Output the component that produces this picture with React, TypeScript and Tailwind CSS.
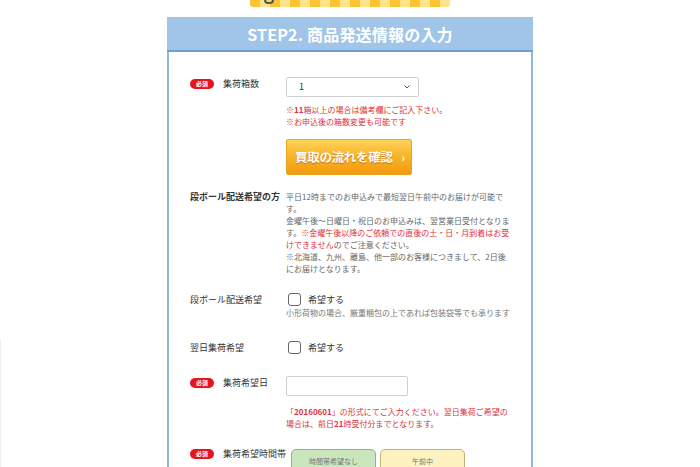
import React from 'react';

const jp = { fontFamily: '"Noto Sans CJK JP", "Noto Sans", sans-serif' };

function Badge() {
  return (
    <span className="inline-flex h-[10px] w-[24px] items-center justify-center rounded-full bg-[#e8141c] text-[6px] font-bold leading-none text-white">
      必須
    </span>
  );
}

function Label({ required, bold, children }: { required?: boolean; bold?: boolean; children: React.ReactNode }) {
  return (
    <div className="flex w-[96px] shrink-0 items-center">
      {required ? <Badge /> : null}
      <span className={`${required ? 'ml-[9px]' : ''} text-[9px] leading-[12px] text-[#333] ${bold ? 'font-bold' : ''}`}>
        {children}
      </span>
    </div>
  );
}

function Check({ text }: { text: string }) {
  return (
    <div className="flex items-center">
      <span className="ml-[2px] inline-block h-[13px] w-[13px] rounded-[3px] border border-[#666] bg-white" />
      <span className="ml-[7px] text-[9px] leading-[12px] text-[#333]">{text}</span>
    </div>
  );
}

export default function App() {
  return (
    <div className="relative h-[467px] w-full overflow-hidden bg-white" style={jp}>
      <div className="absolute left-0 top-[340px] h-[127px] w-px bg-[#eeeeee]" />
      <div className="mx-auto w-[366px]">
        {/* banner bottom edge */}
        <div className="relative mx-auto h-[7px] w-[200px] rounded-b-[3px] bg-[repeating-linear-gradient(90deg,#fbc531_0px,#fbc531_10px,#fde38a_10px,#fde38a_20px)]">
          <span className="absolute left-[14px] top-[-4px] h-[8px] w-[10px] rounded-full border-2 border-[#555] bg-[#f5d36a]" />
        </div>

        <div className="mt-[10px] flex h-[35px] items-center justify-center border-b-2 border-[#6e9fd0] bg-[#a0c5e8]">
          <h2 className="text-[16px] font-bold tracking-[0.2px] text-white">STEP2. 商品発送情報の入力</h2>
        </div>

        <div className="h-[420px] border-x-2 border-[#8cb6da] pl-[21px] pt-[25px]">
          {/* 集荷箱数 */}
          <div className="flex items-start">
            <div className="mt-[1px]">
              <Label required>集荷箱数</Label>
            </div>
            <div>
              <div className="flex h-[20px] w-[133px] items-center justify-between rounded-[2px] border border-[#cfcfcf] bg-white pl-[12px] pr-[8px]">
                <span className="text-[9px] text-[#333]">1</span>
                <svg width="6" height="4" viewBox="0 0 6 4">
                  <path d="M0.5 0.5 L3 3 L5.5 0.5" fill="none" stroke="#555" strokeWidth="1" />
                </svg>
              </div>
              <div className="mt-[7px] text-[8px] leading-[12px] text-[#e0303a]">
                <p>
                  ※<span className="font-bold">11</span>箱以上の場合は備考欄にご記入下さい。
                </p>
                <p>※お申込後の箱数変更も可能です</p>
              </div>
              <div className="mt-[11px] flex h-[36px] w-[126px] items-center rounded-[2px] border border-[#eaa524] bg-[linear-gradient(180deg,#fdd35a_0%,#f9b52b_45%,#f39a0e_100%)] pl-[8px]">
                <span className="text-[12.5px] font-bold tracking-[-0.3px] text-white [text-shadow:0_1px_1px_#c0700a]">
                  買取の流れを確認
                </span>
                <span className="ml-[9px] text-[11px] font-bold text-white">›</span>
              </div>
            </div>
          </div>

          {/* 段ボール配送希望の方 */}
          <div className="mt-[16px] flex items-start">
            <Label bold>段ボール配送希望の方</Label>
            <div className="w-[226px] whitespace-nowrap text-[8px] leading-[12px] text-[#666]">
              <p>平日12時までのお申込みで最短翌日午前中のお届けが可能で</p>
              <p>す。</p>
              <p>金曜午後～日曜日・祝日のお申込みは、翌営業日受付となりま</p>
              <p>
                す。<span className="text-[#e0303a]">※金曜午後以降のご依頼での直後の土・日・月到着はお受</span>
              </p>
              <p>
                <span className="text-[#e0303a]">けできません</span>のでご注意ください。
              </p>
              <p>※北海道、九州、離島、他一部のお客様につきまして、2日後</p>
              <p>にお届けとなります。</p>
            </div>
          </div>

          {/* 段ボール配送希望 */}
          <div className="mt-[18px] flex items-start">
            <div className="mt-[1px]">
              <Label>段ボール配送希望</Label>
            </div>
            <div>
              <Check text="希望する" />
              <p className="mt-[1px] text-[8px] leading-[12px] text-[#777]">
                小形荷物の場合、厳重梱包の上であれば包装袋等でも承ります
              </p>
            </div>
          </div>

          {/* 翌日集荷希望 */}
          <div className="mt-[22px] flex items-start">
            <div className="mt-[1px]">
              <Label>翌日集荷希望</Label>
            </div>
            <Check text="希望する" />
          </div>

          {/* 集荷希望日 */}
          <div className="mt-[22px] flex items-start">
            <div className="mt-[1px]">
              <Label required>集荷希望日</Label>
            </div>
            <div>
              <div className="h-[20px] w-[122px] rounded-[2px] border border-[#cfcfcf] bg-white" />
              <div className="mt-[10px] w-[226px] text-[8px] leading-[12px] text-[#e0303a]">
                <p>
                  「<span className="font-bold">20160601</span>」の形式にてご入力ください。翌日集荷ご希望の
                </p>
                <p>
                  場合は、前日<span className="font-bold">21</span>時受付分までとなります。
                </p>
              </div>
            </div>
          </div>

          {/* 集荷希望時間帯 */}
          <div className="mt-[19px] flex items-start">
            <div className="mt-[-1px]">
              <Label required>集荷希望時間帯</Label>
            </div>
            <div className="ml-[5px] flex gap-[4px]">
              <div className="flex h-[24px] w-[85px] items-center justify-center rounded-[5px] border border-[#8fb47f] bg-[#c9e6bd] text-[7px] text-[#777]">
                時間帯希望なし
              </div>
              <div className="flex h-[24px] w-[85px] items-center justify-center rounded-[5px] border border-[#c3b27a] bg-[#fdf2c0] text-[7px] text-[#777]">
                午前中
              </div>
            </div>
          </div>
        </div>
      </div>
    </div>
  );
}
